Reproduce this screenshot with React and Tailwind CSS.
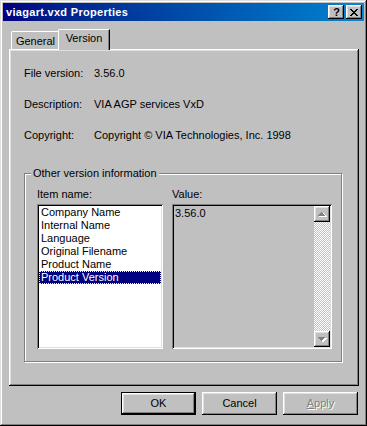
const raised = "shadow-[inset_-1px_-1px_#000000,inset_1px_1px_#ffffff,inset_-2px_-2px_#808080,inset_2px_2px_#dfdfdf]";
const sunken = "shadow-[inset_1px_1px_#808080,inset_-1px_-1px_#ffffff,inset_2px_2px_#000000,inset_-2px_-2px_#dfdfdf]";

function Arrow({ up }) {
  return (
    <svg width="16" height="16" viewBox="0 0 16 16" shapeRendering="crispEdges">
      {up ? (
        <>
          <path d="M5 10h8v1H5zM6 9h6v1H6zM7 8h4v1H7zM8 7h2v1H8z" fill="#ffffff" />
          <path d="M4 9h7v1H4zM5 8h5v1H5zM6 7h3v1H6zM7 6h1v1H7z" fill="#808080" />
        </>
      ) : (
        <>
          <path d="M5 7h8v1H5zM6 8h6v1H6zM7 9h4v1H7zM8 10h2v1H8z" fill="#ffffff" />
          <path d="M4 6h7v1H4zM5 7h5v1H5zM6 8h3v1H6zM7 9h1v1H7z" fill="#808080" />
        </>
      )}
    </svg>
  );
}

function Button({ children, isDefault }) {
  return (
    <div
      className={
        "w-[75px] h-[23px] flex items-center justify-center bg-[#c0c0c0] " +
        (isDefault
          ? "border border-black shadow-[inset_-1px_-1px_#000000,inset_1px_1px_#ffffff,inset_-2px_-2px_#808080,inset_2px_2px_#dfdfdf]"
          : raised)
      }
    >
      {children}
    </div>
  );
}

export default function App() {
  const items = [
    "Company Name",
    "Internal Name",
    "Language",
    "Original Filename",
    "Product Name",
    "Product Version",
  ];
  return (
    <div className="w-[367px] h-[426px] bg-[#c0c0c0] p-[3px] flex flex-col font-['Liberation_Sans',Arial,sans-serif] text-[11px] leading-[13px] text-black shadow-[inset_-1px_-1px_#000000,inset_1px_1px_#dfdfdf,inset_-2px_-2px_#808080,inset_2px_2px_#ffffff]">
      {/* Title bar */}
      <div className="h-[18px] flex items-center bg-gradient-to-r from-[#000080] to-[#1084d0] pl-[3px] pr-[2px]">
        <span className="flex-1 text-white font-bold text-[11px] leading-[13px] tracking-[0.3px]">viagart.vxd Properties</span>
        <div className="flex gap-[2px]">
          <div className={"w-[16px] h-[14px] bg-[#c0c0c0] flex items-center justify-center font-bold text-[11px] leading-[11px] pl-[1px] " + raised}>?</div>
          <div className={"w-[16px] h-[14px] bg-[#c0c0c0] flex items-center justify-center " + raised}>
            <svg width="8" height="7" viewBox="0 0 8 7" shapeRendering="crispEdges">
              <path d="M0 0h2v1H0zM6 0h2v1H6zM1 1h2v1H1zM5 1h2v1H5zM2 2h4v1H2zM3 3h2v1H3zM2 4h4v1H2zM1 5h2v1H1zM5 5h2v1H5zM0 6h2v1H0zM6 6h2v1H6z" fill="#000" />
            </svg>
          </div>
        </div>
      </div>

      {/* Tabs */}
      <div className="mt-[8px] ml-[6px] flex flex-col w-[350px]">
        <div className="flex items-end h-[20px] pl-[2px]">
          <div className="w-[49px] h-[18px] flex items-center justify-center border-l border-t border-white rounded-tl-[2px] border-r border-r-black shadow-[inset_-1px_0_#808080] pt-[2px]">
            General
          </div>
          <div className="relative z-10 -ml-[2px] -mb-px w-[52px] h-[21px] flex items-start justify-center pt-[2px] bg-[#c0c0c0] border-l border-t border-white rounded-tl-[2px] border-r border-r-black shadow-[inset_-1px_0_#808080]">
            Version
          </div>
        </div>

        {/* Panel */}
        <div className={"h-[337px] bg-[#c0c0c0] flex flex-col pl-[15px] pt-[18px] " + raised}>
          <div className="flex flex-col gap-[18px]">
            <div className="flex h-[13px]">
              <span className="w-[70px]">File version:</span>
              <span>3.56.0</span>
            </div>
            <div className="flex h-[13px]">
              <span className="w-[70px]">Description:</span>
              <span>VIA AGP services VxD</span>
            </div>
            <div className="flex h-[13px]">
              <span className="w-[70px]">Copyright:</span>
              <span>Copyright © VIA Technologies, Inc. 1998</span>
            </div>
          </div>

          {/* Group box */}
          <div className="relative mt-[31px] w-[318px] h-[189px] border border-[#808080] shadow-[inset_1px_1px_#ffffff,1px_1px_#ffffff] pl-[12px] pt-[14px]">
            <span className="absolute left-[6px] -top-[7px] bg-[#c0c0c0] px-[2px]">Other version information</span>
            <div className="flex gap-[9px]">
              <div className="flex flex-col w-[126px]">
                <span className="h-[13px]">Item name:</span>
                <div className={"mt-[3px] h-[145px] bg-white p-[2px] flex flex-col " + sunken}>
                  {items.map((it) => (
                    <div
                      key={it}
                      className={
                        "h-[13px] leading-[13px] pl-[2px] whitespace-nowrap " +
                        (it === "Product Version"
                          ? "bg-[#000080] text-white outline outline-1 outline-dotted outline-[#ffff80] -outline-offset-1"
                          : "")
                      }
                    >
                      {it}
                    </div>
                  ))}
                </div>
              </div>
              <div className="flex flex-col w-[160px]">
                <span className="h-[13px]">Value:</span>
                <div className={"mt-[3px] h-[145px] bg-[#c0c0c0] p-[2px] flex " + sunken}>
                  <div className="flex-1 pl-[1px] pt-[1px]">3.56.0</div>
                  <div className="w-[16px] flex flex-col">
                    <div className={"h-[16px] bg-[#c0c0c0] " + raised}>
                      <Arrow up />
                    </div>
                    <div className="flex-1 bg-[repeating-conic-gradient(#c0c0c0_0%_25%,#ffffff_0%_50%)] bg-[length:2px_2px]" />
                    <div className={"h-[16px] bg-[#c0c0c0] " + raised}>
                      <Arrow />
                    </div>
                  </div>
                </div>
              </div>
            </div>
          </div>
        </div>
      </div>

      {/* Buttons */}
      <div className="mt-[6px] flex justify-end gap-[6px] mr-[6px]">
        <Button isDefault>OK</Button>
        <Button>Cancel</Button>
        <Button>
          <span className="text-[#808080] [text-shadow:1px_1px_#ffffff]">
            <span className="underline">A</span>pply
          </span>
        </Button>
      </div>
    </div>
  );
}
